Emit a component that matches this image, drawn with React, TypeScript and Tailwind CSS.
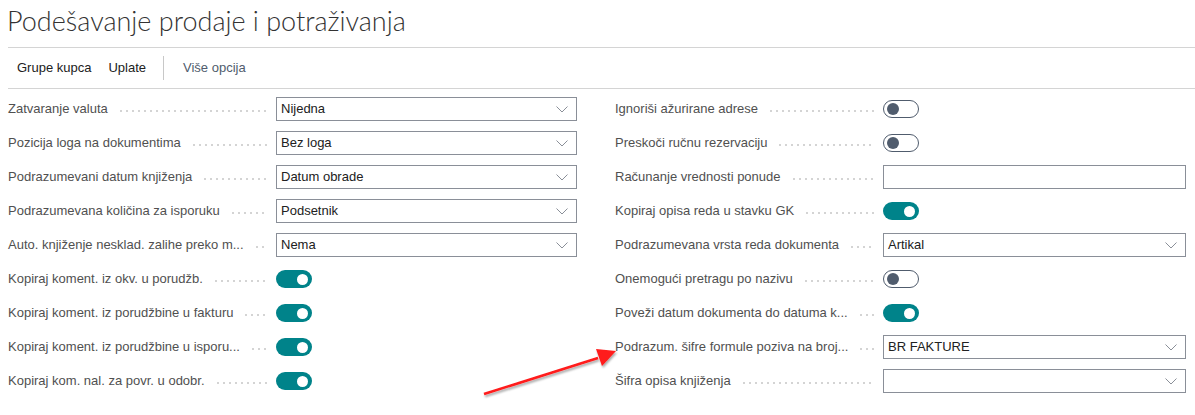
import React from "react";

type Field =
  | { label: string; kind: "select"; value: string }
  | { label: string; kind: "text"; value: string }
  | { label: string; kind: "toggle"; on: boolean };

const leftFields: Field[] = [
  { label: "Zatvaranje valuta", kind: "select", value: "Nijedna" },
  { label: "Pozicija loga na dokumentima", kind: "select", value: "Bez loga" },
  { label: "Podrazumevani datum knjiženja", kind: "select", value: "Datum obrade" },
  { label: "Podrazumevana količina za isporuku", kind: "select", value: "Podsetnik" },
  { label: "Auto. knjiženje nesklad. zalihe preko m...", kind: "select", value: "Nema" },
  { label: "Kopiraj koment. iz okv. u porudžb.", kind: "toggle", on: true },
  { label: "Kopiraj koment. iz porudžbine u fakturu", kind: "toggle", on: true },
  { label: "Kopiraj koment. iz porudžbine u isporu...", kind: "toggle", on: true },
  { label: "Kopiraj kom. nal. za povr. u odobr.", kind: "toggle", on: true },
];

const rightFields: Field[] = [
  { label: "Ignoriši ažurirane adrese", kind: "toggle", on: false },
  { label: "Preskoči ručnu rezervaciju", kind: "toggle", on: false },
  { label: "Računanje vrednosti ponude", kind: "text", value: "" },
  { label: "Kopiraj opisa reda u stavku GK", kind: "toggle", on: true },
  { label: "Podrazumevana vrsta reda dokumenta", kind: "select", value: "Artikal" },
  { label: "Onemogući pretragu po nazivu", kind: "toggle", on: false },
  { label: "Poveži datum dokumenta do datuma k...", kind: "toggle", on: true },
  { label: "Podrazum. šifre formule poziva na broj...", kind: "select", value: "BR FAKTURE" },
  { label: "Šifra opisa knjiženja", kind: "select", value: "" },
];

function Chevron() {
  return (
    <svg width="12" height="7" viewBox="0 0 12 7" className="shrink-0">
      <path d="M0.5 0.5 L6 6 L11.5 0.5" fill="none" stroke="#8a8f98" strokeWidth="1" />
    </svg>
  );
}

function Toggle({ on }: { on: boolean }) {
  if (on) {
    return (
      <div className="w-[36px] h-[18px] rounded-full bg-[#00838a] flex items-center justify-end pr-[4px]">
        <div className="w-[11px] h-[11px] rounded-full bg-white" />
      </div>
    );
  }
  return (
    <div className="w-[36px] h-[18px] rounded-full border border-[#505c6d] bg-white flex items-center pl-[3px]">
      <div className="w-[12px] h-[12px] rounded-full bg-[#505c6d]" />
    </div>
  );
}

function Row({ field, inputWidth }: { field: Field; inputWidth: string }) {
  return (
    <div className="flex items-center h-[34px]">
      <div className="flex items-center w-[268px] shrink-0 pr-[8px]">
        <span className="whitespace-nowrap text-[13px] text-[#505050]">{field.label}</span>
        <span className="flex-1 ml-[10px] h-[2px] mt-[3px] bg-[radial-gradient(circle,#d4d4d4_0.8px,transparent_1.1px)] bg-[length:6px_2px]" />
      </div>
      {field.kind === "toggle" ? (
        <Toggle on={field.on} />
      ) : (
        <div
          className={`${inputWidth} h-[24px] border border-[#8a8f98] bg-white flex items-center justify-between pl-[4px] pr-[8px]`}
        >
          <span className="text-[13px] text-[#212121] whitespace-nowrap">{field.value}</span>
          {field.kind === "select" && <Chevron />}
        </div>
      )}
    </div>
  );
}

export default function App() {
  return (
    <div className="relative w-[1195px] h-[415px] bg-white overflow-hidden font-['Liberation_Sans',sans-serif]">
      <h1 className="pl-[7px] pt-[1px] h-[47px] font-['Lato','Liberation_Sans',sans-serif] text-[27px] font-light text-[#333333] leading-[40px]">
        Podešavanje prodaje i potraživanja
      </h1>
      <div className="ml-[8px] border-t border-b border-[#d4d4d4] h-[42px] flex items-center text-[13px]">
        <span className="pl-[9px] text-[#212121]">Grupe kupca</span>
        <span className="pl-[17px] text-[#212121]">Uplate</span>
        <span className="ml-[17px] w-px h-[24px] bg-[#c8c8c8]" />
        <span className="pl-[19px] text-[#505c6d]">Više opcija</span>
      </div>
      <div className="flex pl-[8px] pt-[3px]">
        <div className="w-[607px] shrink-0">
          {leftFields.map((f) => (
            <Row key={f.label} field={f} inputWidth="w-[301px]" />
          ))}
        </div>
        <div className="flex-1">
          {rightFields.map((f) => (
            <Row key={f.label} field={f} inputWidth="w-[303px]" />
          ))}
        </div>
      </div>
      <svg className="absolute left-0 top-0 pointer-events-none" width="1195" height="415">
        <defs>
          <filter id="sh" x="-20%" y="-50%" width="140%" height="200%">
            <feDropShadow dx="1" dy="2" stdDeviation="1.2" floodColor="#000" floodOpacity="0.35" />
          </filter>
        </defs>
        <g filter="url(#sh)">
          <line x1="484" y1="394" x2="598" y2="358" stroke="#ff1a1a" strokeWidth="2.5" />
          <polygon points="616,351 596,349 602,366" fill="#ff1a1a" />
        </g>
      </svg>
    </div>
  );
}
